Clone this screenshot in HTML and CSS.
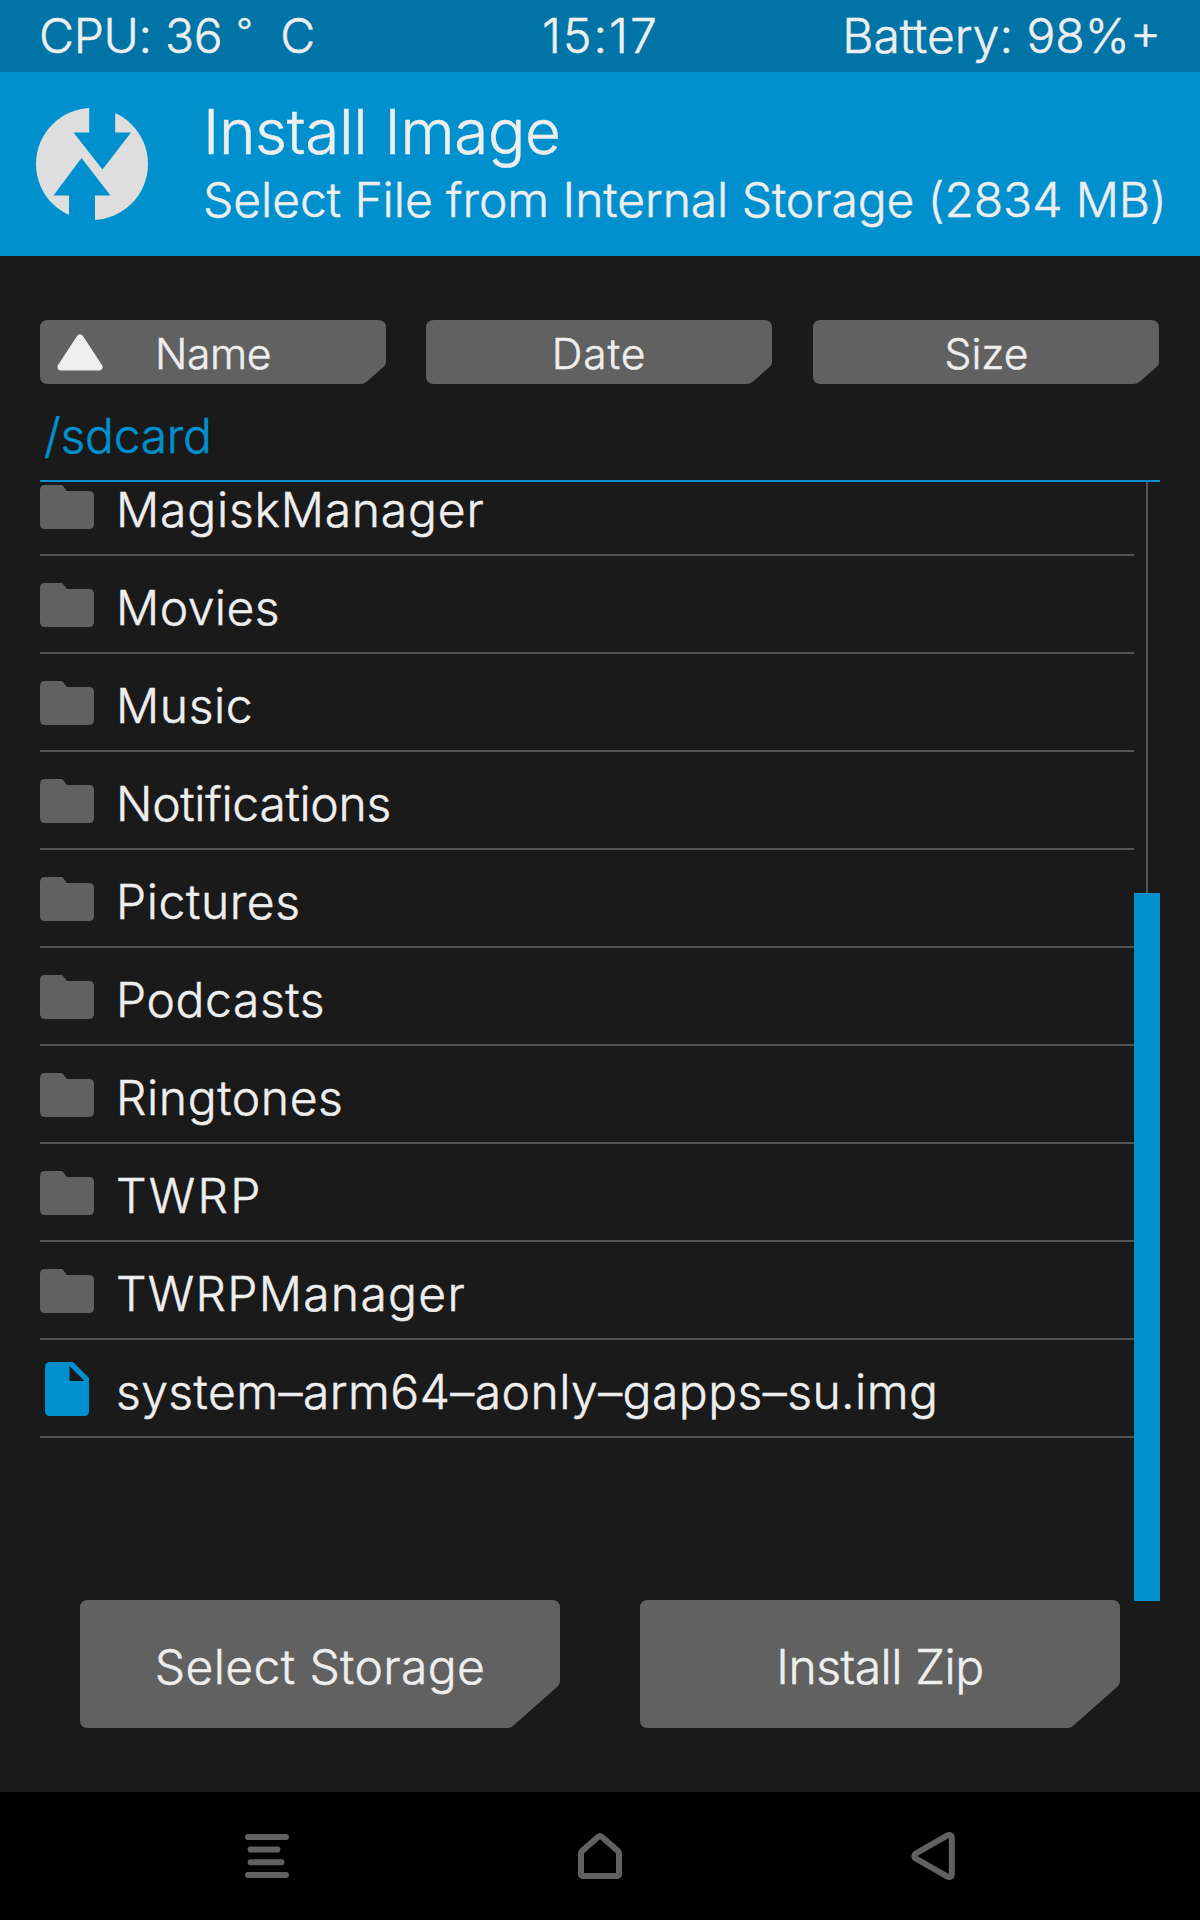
FILE: index.html
```
<!DOCTYPE html>
<html lang="en">
<head>
<meta charset="utf-8">
<title>Install Image</title>
<link rel="stylesheet" href="styles.css">
</head>
<body>
<svg class="defs" width="0" height="0" aria-hidden="true">
  <symbol id="folder" viewBox="0 0 54 44"><path d="M5 0H21Q22 0 23 1L27 6H49Q54 6 54 11V39Q54 44 49 44H5Q0 44 0 39V5Q0 0 5 0Z"/></symbol>
  <symbol id="file" viewBox="0 0 44 54"><path fill-rule="evenodd" d="M5 0H28L44 16V49Q44 54 39 54H5Q0 54 0 49V5Q0 0 5 0ZM24.500 4V19H39.500Z"/></symbol>
</svg>
<div class="screen">
  <div class="status">
    <span class="cpu">CPU: 36<span class="degree">°</span>C</span>
    <span class="clock">15:17</span>
    <span class="battery">Battery: 98%+</span>
  </div>
  <header class="header">
    <svg class="logo" width="112" height="112" viewBox="0 0 112 112">
      <circle cx="56" cy="56" r="56" fill="#dedede"/>
      <path fill="#0090cd" d="M53.200 -2V24.400H37.500L66.500 61.500L95 24.400H79.200V-2ZM33 114V87.400H17.500L45.500 50L74.500 87.400H59V114Z"/>
    </svg>
    <div>
      <h1>Install Image</h1>
      <p class="subtitle">Select File from Internal Storage (2834 MB)</p>
    </div>
  </header>
  <main class="main">
    <div class="sort">
      <button class="sort-button name">
        <svg class="arrow" width="46" height="37" viewBox="0 0 46 37"><path d="M23 4L42 33H4Z" fill="#eee" stroke="#eee" stroke-width="7" stroke-linejoin="round"/></svg>
        <span>Name</span>
      </button>
      <button class="sort-button date">Date</button>
      <button class="sort-button size">Size</button>
    </div>
    <div class="path">/sdcard</div>
    <div class="browser">
      <ul class="list">
        <li><svg class="folder"><use href="#folder"/></svg><span class="manager">MagiskManager</span></li>
        <li><svg class="folder"><use href="#folder"/></svg><span class="snug">Movies</span></li>
        <li><svg class="folder"><use href="#folder"/></svg><span>Music</span></li>
        <li><svg class="folder"><use href="#folder"/></svg><span class="tight">Notifications</span></li>
        <li><svg class="folder"><use href="#folder"/></svg><span>Pictures</span></li>
        <li><svg class="folder"><use href="#folder"/></svg><span>Podcasts</span></li>
        <li><svg class="folder"><use href="#folder"/></svg><span>Ringtones</span></li>
        <li><svg class="folder"><use href="#folder"/></svg><span class="loose">TWRP</span></li>
        <li><svg class="folder"><use href="#folder"/></svg><span class="wide">TWRPManager</span></li>
        <li><svg class="file"><use href="#file"/></svg><span class="snug">system–arm64–aonly–gapps–su.img</span></li>
      </ul>
      <div class="scrollbar"><div class="track"></div><div class="thumb"></div></div>
    </div>
    <div class="actions">
      <button class="action storage">Select Storage</button>
      <button class="action zip">Install Zip</button>
    </div>
  </main>
  <nav class="nav">
    <svg width="44" height="44" viewBox="0 0 44 44"><path d="M3 3H41M5.500 15.600H32.500M5.500 28.300H36.500M3 41H41"/></svg>
    <svg width="46" height="48" viewBox="0 0 46 48"><path d="M4 21.500Q4 20 5.300 18.700L21 4.900Q23 3.300 25 4.900L40.700 18.700Q42 20 42 21.500V41.500Q42 44 39.500 44H6.500Q4 44 4 41.500Z"/></svg>
    <svg width="44" height="48" viewBox="0 0 44 48"><path d="M36 3.600Q40.800 1.800 40.800 6.500V41.500Q40.800 46.200 36 44.400L4.800 26.500Q1.500 24 4.800 21.500Z"/></svg>
  </nav>
</div>
</body>
</html>
```
FILE: styles.css
```
* { box-sizing: border-box; }

body {
  margin: 0;
  background: #1a1a1a;
  color: #eee;
  font: 300 48px/72px Inter, "Liberation Sans", sans-serif;
  -webkit-text-stroke: 0.5px currentColor;
}

h1, p, ul { margin: 0; padding: 0; font-weight: 300; }
button { border: 0; padding: 0; color: inherit; font: inherit; -webkit-text-stroke: inherit; }
.defs { position: absolute; }

.screen {
  width: 1200px;
  height: 1920px;
  display: flex;
  flex-direction: column;
  overflow: hidden;
}

.status {
  height: 72px;
  padding: 0 39px;
  display: grid;
  grid-template-columns: 1fr auto 1fr;
  line-height: 71px;
  background: #0074a6;
  white-space: nowrap;
}
.cpu { letter-spacing: -0.3px; }
.degree {
  display: inline-block;
  width: 58px;
  padding-left: 14px;
  font-size: 36px;
  line-height: 36px;
  vertical-align: 9px;
}
.clock { letter-spacing: 2.1px; margin-right: -1px; }
.battery { text-align: right; }

.header {
  height: 184px;
  padding: 26px 0 0 36px;
  display: flex;
  gap: 55px;
  background: #0090cd;
  white-space: nowrap;
}
.logo { margin-top: 10px; overflow: hidden; }
h1 { font-size: 62px; line-height: 68px; letter-spacing: -0.32px; }
.subtitle { line-height: 67px; letter-spacing: -0.06px; }

.main { flex: 1; padding: 64px 40px 0; }

.sort { display: flex; gap: 40px; }
.sort-button {
  width: 346px;
  height: 64px;
  padding-top: 3px;
  display: flex;
  align-items: center;
  justify-content: center;
  font-size: 42.6px;
  line-height: 60px;
  background: #616161;
  clip-path: path('M8 0H338Q346 0 346 8V42Q346 45 344 46.500L327 61.500Q324 64 320 64H8Q0 64 0 56V8Q0 0 8 0Z');
}
.sort-button.name { justify-content: flex-start; letter-spacing: -0.4px; }
.sort-button.name span { margin-left: 52px; }
.sort-button.date { letter-spacing: 0.8px; }
.sort-button.size { margin-left: 1px; padding-left: 1px; }
.arrow { margin: -3px 0 0 17px; }

.path {
  height: 98px;
  padding: 16px 0 0 4px;
  border-bottom: 2px solid #0090cd;
  color: #0090cd;
  letter-spacing: -0.25px;
}

.browser { height: 1119px; display: flex; }
.list { width: 1094px; list-style: none; line-height: 40px; letter-spacing: 0.6px; }
.list li {
  height: 98px;
  display: flex;
  align-items: center;
  border-bottom: 2px solid #535353;
}
/* the list is scrolled, so its first row starts above the viewport */
.list li:first-child { height: 74px; padding-bottom: 24px; }
.list span { padding-top: 7px; white-space: nowrap; }
.list .tight { letter-spacing: -0.3px; }
.list .snug { letter-spacing: 0.45px; }
.list .manager { letter-spacing: 0.8px; }
.list .wide { letter-spacing: 1.3px; }
.list .loose { letter-spacing: 2.3px; }
.folder { width: 54px; height: 44px; margin: 2px 22px 0 0; fill: #616161; }
.file { width: 44px; height: 54px; margin: 2px 27px 0 5px; fill: #0090cd; }

.scrollbar { width: 26px; display: flex; flex-direction: column; align-items: center; }
.track { width: 2px; height: 411px; background: #535353; }
.thumb { width: 26px; flex: 1; background: #0090cd; }

.actions { display: flex; gap: 80px; margin: -1px 40px 0; }
.action {
  width: 480px;
  height: 128px;
  padding-top: 6px;
  line-height: 72px;
  background: #616161;
  clip-path: path('M8 0H472Q480 0 480 8V81Q480 84 478 86L433 126Q431 128 427 128H8Q0 128 0 120V8Q0 0 8 0Z');
}
.storage { letter-spacing: 0.4px; }
.zip { letter-spacing: -0.45px; }

.nav {
  height: 128px;
  padding: 0 100px;
  display: grid;
  grid-template-columns: repeat(3, 1fr);
  place-items: center;
  background: #000;
}
.nav svg {
  fill: none;
  stroke: #616161;
  stroke-width: 6;
  stroke-linecap: round;
  stroke-linejoin: round;
}
```
